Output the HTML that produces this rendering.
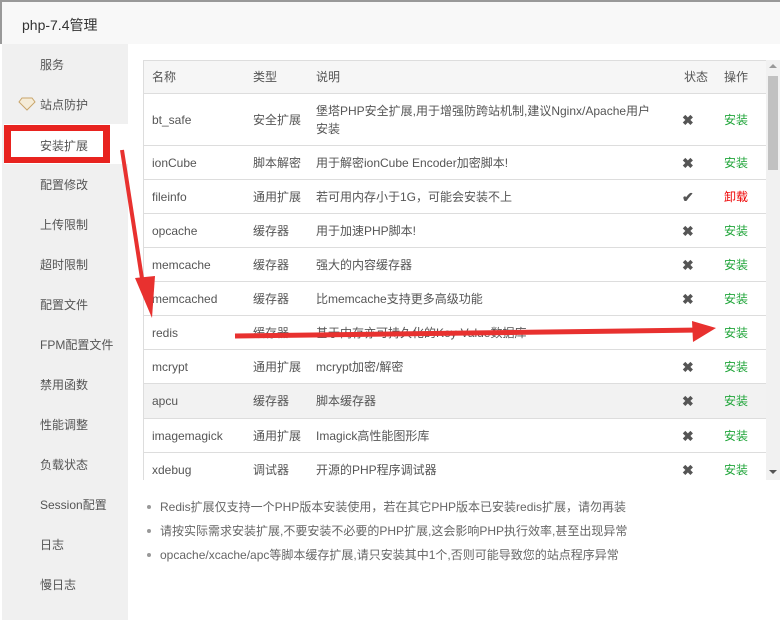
<!DOCTYPE html>
<html><head><meta charset="utf-8"><style>
*{margin:0;padding:0;box-sizing:border-box}
body{width:780px;height:620px;overflow:hidden;background:#fff;font-family:"Liberation Sans","Noto Sans CJK SC",sans-serif;font-size:12px;color:#555;position:relative}
.title{position:absolute;left:0;top:0;width:780px;height:44px;background:#f8f8f8;border-top:2px solid #999;border-left:2px solid #999;padding:13px 0 0 20px;font-size:14px;color:#333}
.side{position:absolute;left:2px;top:44px;width:126px;height:576px;background:#f0f0f0}
.side div{position:absolute;left:38px;font-size:12px;color:#555}
.activebg{position:absolute;left:4px;top:124px;width:124px;height:40px;background:#fff}
.active{position:absolute;left:4px;top:125px;width:106px;height:38px;background:#fff;border:7px solid #e8231f;border-width:6px 7px}
.tbl{position:absolute;left:143px;top:60px;width:623px;height:420px;overflow:hidden;border-left:1px solid #ddd;border-top:1px solid #ddd}
.r{position:absolute;left:0;width:623px;border-bottom:1px solid #ddd}
.r span{position:absolute;top:50%;transform:translateY(-50%);line-height:18px}
.c1{left:8px}.c2{left:109px}.c3{left:172px;width:345px}.c4{left:538px;color:#555;font-size:14px;font-weight:bold}.c5{left:580px;color:#20a53a}
.sb{position:absolute;left:766px;top:60px;width:14px;height:420px;background:#f1f1f1}
.notes{position:absolute;left:147px;top:498px;color:#666;font-size:12px}
.notes p{height:24px;padding-left:13px;position:relative}
.notes p:before{content:"";position:absolute;left:0;top:7px;width:4px;height:4px;border-radius:2px;background:#999}
</style></head><body>
<div class="title">php-7.4管理</div>
<div class="side">
<div style="top:12px">服务</div>
<div style="top:52px">站点防护</div>
<div style="top:132px">配置修改</div>
<div style="top:172px">上传限制</div>
<div style="top:212px">超时限制</div>
<div style="top:252px">配置文件</div>
<div style="top:292px">FPM配置文件</div>
<div style="top:332px">禁用函数</div>
<div style="top:372px">性能调整</div>
<div style="top:412px">负载状态</div>
<div style="top:452px">Session配置</div>
<div style="top:492px">日志</div>
<div style="top:532px">慢日志</div>
</div>
<svg style="position:absolute;left:18px;top:97px" width="18" height="14"><path d="M4 1h10l3 4-8 8-8-8z" fill="#f5ecd8" stroke="#c9a56a"/></svg>
<div class="activebg"></div>
<div class="active"></div>
<div style="position:absolute;left:40px;top:137px;font-size:12px;color:#555">安装扩展</div>
<div class="tbl">
<div class="r" style="top:0;height:33px;background:#f6f6f6"><span class="c1">名称</span><span class="c2">类型</span><span class="c3">说明</span><span class="c4" style="font-weight:normal;font-size:12px;left:540px">状态</span><span class="c5" style="color:#555">操作</span></div>
<div class="r" style="top:33px;height:52px"><span class="c1">bt_safe</span><span class="c2">安全扩展</span><span class="c3">堡塔PHP安全扩展,用于增强防跨站机制,建议Nginx/Apache用户安装</span><span class="c4">✖</span><span class="c5">安装</span></div>
<div class="r" style="top:85px;height:34px"><span class="c1">ionCube</span><span class="c2">脚本解密</span><span class="c3">用于解密ionCube Encoder加密脚本!</span><span class="c4">✖</span><span class="c5">安装</span></div>
<div class="r" style="top:119px;height:34px"><span class="c1">fileinfo</span><span class="c2">通用扩展</span><span class="c3">若可用内存小于1G，可能会安装不上</span><span class="c4">✔</span><span class="c5" style="color:#e00">卸载</span></div>
<div class="r" style="top:153px;height:34px"><span class="c1">opcache</span><span class="c2">缓存器</span><span class="c3">用于加速PHP脚本!</span><span class="c4">✖</span><span class="c5">安装</span></div>
<div class="r" style="top:187px;height:34px"><span class="c1">memcache</span><span class="c2">缓存器</span><span class="c3">强大的内容缓存器</span><span class="c4">✖</span><span class="c5">安装</span></div>
<div class="r" style="top:221px;height:34px"><span class="c1">memcached</span><span class="c2">缓存器</span><span class="c3">比memcache支持更多高级功能</span><span class="c4">✖</span><span class="c5">安装</span></div>
<div class="r" style="top:255px;height:34px"><span class="c1">redis</span><span class="c2">缓存器</span><span class="c3">基于内存亦可持久化的Key-Value数据库</span><span class="c5">安装</span></div>
<div class="r" style="top:289px;height:34px"><span class="c1">mcrypt</span><span class="c2">通用扩展</span><span class="c3">mcrypt加密/解密</span><span class="c4">✖</span><span class="c5">安装</span></div>
<div class="r" style="top:323px;height:35px;background:#f2f2f2"><span class="c1">apcu</span><span class="c2">缓存器</span><span class="c3">脚本缓存器</span><span class="c4">✖</span><span class="c5">安装</span></div>
<div class="r" style="top:358px;height:34px"><span class="c1">imagemagick</span><span class="c2">通用扩展</span><span class="c3">Imagick高性能图形库</span><span class="c4">✖</span><span class="c5">安装</span></div>
<div class="r" style="top:392px;height:34px"><span class="c1">xdebug</span><span class="c2">调试器</span><span class="c3">开源的PHP程序调试器</span><span class="c4">✖</span><span class="c5">安装</span></div>
</div>
<div class="sb"><div style="position:absolute;left:2px;top:16px;width:10px;height:94px;background:#c1c1c1"></div>
<div style="position:absolute;left:3px;top:4px;border:4px solid transparent;border-bottom-color:#999;border-top:0"></div>
<div style="position:absolute;left:3px;bottom:6px;border:4px solid transparent;border-top-color:#555;border-bottom:0"></div></div>
<div class="notes">
<p>Redis扩展仅支持一个PHP版本安装使用，若在其它PHP版本已安装redis扩展，请勿再装</p>
<p>请按实际需求安装扩展,不要安装不必要的PHP扩展,这会影响PHP执行效率,甚至出现异常</p>
<p>opcache/xcache/apc等脚本缓存扩展,请只安装其中1个,否则可能导致您的站点程序异常</p>
</div>
<svg style="position:absolute;left:0;top:0" width="780" height="620">
<path d="M122 150 L143 285" stroke="#e8312f" stroke-width="4"/>
<path d="M135 278 L155 276 L152 318 Z" fill="#e8312f"/>
<path d="M235 336 L700 330" stroke="#e8312f" stroke-width="5"/>
<path d="M692 321 L716 328 L693 342 Z" fill="#e8312f"/>
</svg>
</body></html>
